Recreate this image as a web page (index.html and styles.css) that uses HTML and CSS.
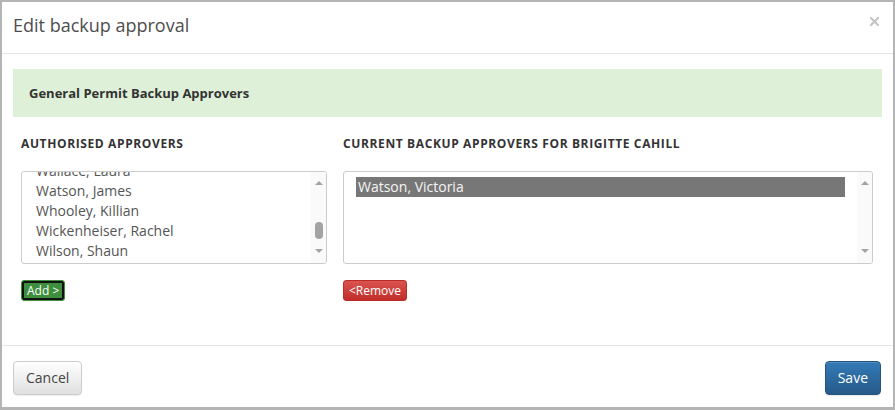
FILE: index.html
```html
<!DOCTYPE html>
<html>
<head>
<meta charset="utf-8">
<link rel="stylesheet" href="styles.css">
</head>
<body>
<div class="modal">
  <div class="modal-header">
    <h4 class="modal-title">Edit backup approval</h4>
    <svg class="close" width="9" height="9" viewBox="0 0 9 9"><path d="M1 1L8 8M8 1L1 8" stroke="#c2c2c2" stroke-width="2" stroke-linecap="square"/></svg>
  </div>
  <div class="modal-body">
    <div class="alert">General Permit Backup Approvers</div>
    <div class="columns">
      <div class="col">
        <div class="col-label">Authorised Approvers</div>
        <div class="listbox">
          <div class="options">
            <div class="options-inner scrolled">
              <div class="opt">Wallace, Laura</div>
              <div class="opt">Watson, James</div>
              <div class="opt">Whooley, Killian</div>
              <div class="opt">Wickenheiser, Rachel</div>
              <div class="opt">Wilson, Shaun</div>
            </div>
          </div>
          <div class="scrollbar">
            <span class="arrow-up"></span>
            <div class="track"><span class="thumb"></span></div>
            <span class="arrow-down"></span>
          </div>
        </div>
        <div class="actions"><button class="btn-xs btn-add">Add &gt;</button></div>
      </div>
      <div class="col">
        <div class="col-label">Current backup approvers for Brigitte Cahill</div>
        <div class="listbox">
          <div class="options">
            <div class="options-inner">
              <div class="opt selected">Watson, Victoria</div>
            </div>
          </div>
          <div class="scrollbar">
            <span class="arrow-up"></span>
            <div class="track"></div>
            <span class="arrow-down"></span>
          </div>
        </div>
        <div class="actions"><button class="btn-xs btn-remove">&lt;Remove</button></div>
      </div>
    </div>
  </div>
  <div class="modal-footer">
    <button class="btn btn-default">Cancel</button>
    <button class="btn btn-primary">Save</button>
  </div>
</div>
</body>
</html>
```

FILE: styles.css
```css
html, body {
  margin: 0;
  padding: 0;
  background: #fff;
}
body {
  font-family: "Open Sans", "DejaVu Sans", sans-serif;
  color: #333;
}
.modal {
  width: 895px;
  height: 410px;
  box-sizing: border-box;
  border: 2px solid #b4b4b4;
  border-bottom-width: 3px;
  display: flex;
  flex-direction: column;
  background: #fff;
}
.modal-header {
  display: flex;
  justify-content: space-between;
  align-items: flex-start;
  padding: 10px 14px 15px 11px;
  border-bottom: 1px solid #e5e5e5;
}
.modal-title {
  margin: 0;
  font-size: 18px;
  line-height: 26px;
  font-weight: normal;
  color: #4d4d4d;
}
.close {
  margin-top: 5px;
  display: block;
}
.modal-body {
  flex: 1;
  padding: 15px 11px 0 11px;
}
.alert {
  background: #dff0d8;
  padding: 15px 16px;
  font-size: 13px;
  line-height: 18px;
  font-weight: bold;
  color: #333;
}
.columns {
  display: grid;
  grid-template-columns: 306px 1fr;
  column-gap: 16px;
  padding: 0 9px 0 8px;
}
.col-label {
  margin: 18px 0 18px;
  font-size: 12px;
  line-height: 18px;
  font-weight: bold;
  letter-spacing: 0.62px;
  text-transform: uppercase;
  color: #333;
}
.listbox {
  height: 93px;
  box-sizing: border-box;
  border: 1px solid #ccc;
  border-radius: 3px;
  display: flex;
  overflow: hidden;
  background: #fff;
}
.options {
  flex: 1;
  overflow: hidden;
  padding: 5px 12px 0 12px;
}
.options-inner.scrolled {
  margin-top: -16px;
}
.opt {
  font-size: 14px;
  line-height: 20px;
  padding-left: 2px;
  color: #555;
  white-space: nowrap;
}
.opt.selected {
  background: #777;
  color: #f4f4f4;
}
.scrollbar {
  width: 15px;
  background: #fafafa;
  display: flex;
  flex-direction: column;
  align-items: center;
  padding: 9px 0 10px;
  box-sizing: border-box;
}
.arrow-up, .arrow-down {
  width: 0;
  height: 0;
  border-left: 4px solid transparent;
  border-right: 4px solid transparent;
}
.arrow-up {
  border-bottom: 4px solid #a3a3a3;
}
.arrow-down {
  border-top: 4px solid #a3a3a3;
}
.track {
  flex: 1;
  display: flex;
  flex-direction: column;
  align-items: center;
}
.thumb {
  margin-top: 37px;
  width: 8px;
  height: 17px;
  border-radius: 4px;
  background: #a3a3a3;
}
.actions {
  margin-top: 16px;
  display: flex;
}
button {
  font-family: "Open Sans", "DejaVu Sans", sans-serif;
  cursor: pointer;
}
.btn-xs {
  font-size: 12px;
  line-height: 19px;
  padding: 0 4px;
  border-radius: 3px;
  color: #fff;
}
.btn-add {
  background: #3d8f3d;
  border: 1px solid #3d8f3d;
  box-shadow: inset 0 0 0 2px #111;
  border-radius: 3px;
  padding: 0 5px;
}
.btn-remove {
  background: linear-gradient(#d9534f, #c12e2a);
  border: 1px solid #b92c28;
  padding: 0 5px;
}
.modal-footer {
  border-top: 1px solid #e5e5e5;
  padding: 15px 12px 12px 11px;
  display: flex;
  justify-content: space-between;
}
.btn {
  font-size: 14px;
  line-height: 20px;
  padding: 6px 12px;
  border-radius: 4px;
  box-shadow: inset 0 1px 0 rgba(255,255,255,.15), 0 1px 1px rgba(0,0,0,.075);
}
.btn-default {
  background: linear-gradient(#fff, #e0e0e0);
  border: 1px solid #ccc;
  color: #444;
}
.btn-primary {
  background: linear-gradient(#337ab7, #265a88);
  border: 1px solid #245580;
  color: #fff;
}
```
